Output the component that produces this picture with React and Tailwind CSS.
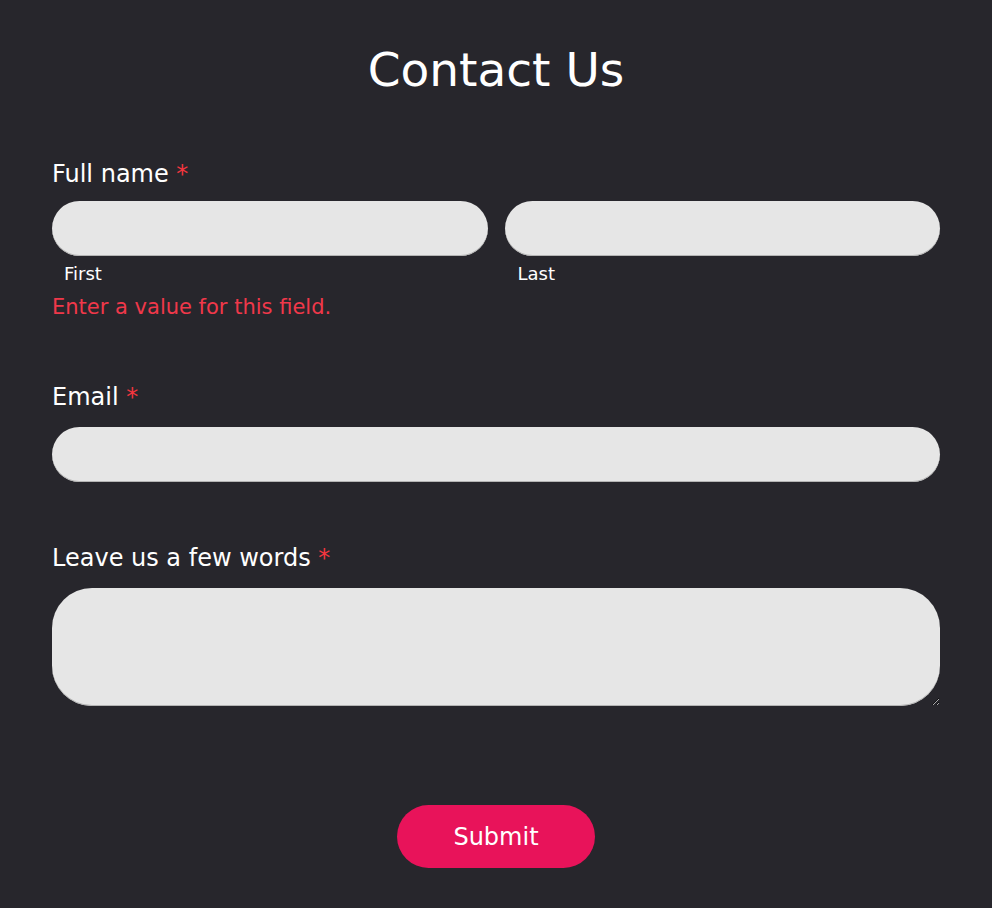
export default function App() {
  const font = { fontFamily: '"DejaVu Sans", Verdana, sans-serif' };
  const field =
    "h-[55px] rounded-full bg-[#e6e6e6] px-6 text-black outline-none shadow-[inset_0_-1px_0_#b4b4b4]";
  return (
    <div className="min-h-[908px] bg-[#27262c] px-[52px] pt-[38px] text-white" style={font}>
      <h1 className="text-center text-[47px] leading-[64px] font-normal">Contact Us</h1>
      <form className="mt-[57px] flex flex-col" onSubmit={(e) => e.preventDefault()}>
        <label className="text-[24px] leading-[30px]">
          Full name <span className="text-[#f5363f]">*</span>
        </label>
        <div className="mt-[12px] grid grid-cols-2 gap-[17px]">
          <div className="flex flex-col">
            <input className={field} />
            <span className="mt-[6px] pl-[12px] text-[18px] leading-[24px]">First</span>
          </div>
          <div className="flex flex-col">
            <input className={field} />
            <span className="mt-[6px] pl-[13px] text-[18px] leading-[24px]">Last</span>
          </div>
        </div>
        <p className="mt-[7px] text-[21px] leading-[28px] text-[#f0384a]">Enter a value for this field.</p>

        <label className="mt-[61px] text-[24px] leading-[30px]">
          Email <span className="text-[#f5363f]">*</span>
        </label>
        <input className={`mt-[15px] ${field}`} />

        <label className="mt-[61px] text-[24px] leading-[30px]">
          Leave us a few words <span className="text-[#f5363f]">*</span>
        </label>
        <textarea className="mt-[15px] h-[118px] rounded-[40px] bg-[#e6e6e6] px-6 py-4 text-black outline-none shadow-[inset_0_-1px_0_#b4b4b4]" />

        <div className="mt-[99px] flex justify-center">
          <button
            type="submit"
            className="h-[63px] w-[198px] rounded-full bg-[#e8135a] text-[24px] text-white"
            style={font}
          >
            Submit
          </button>
        </div>
      </form>
    </div>
  );
}
